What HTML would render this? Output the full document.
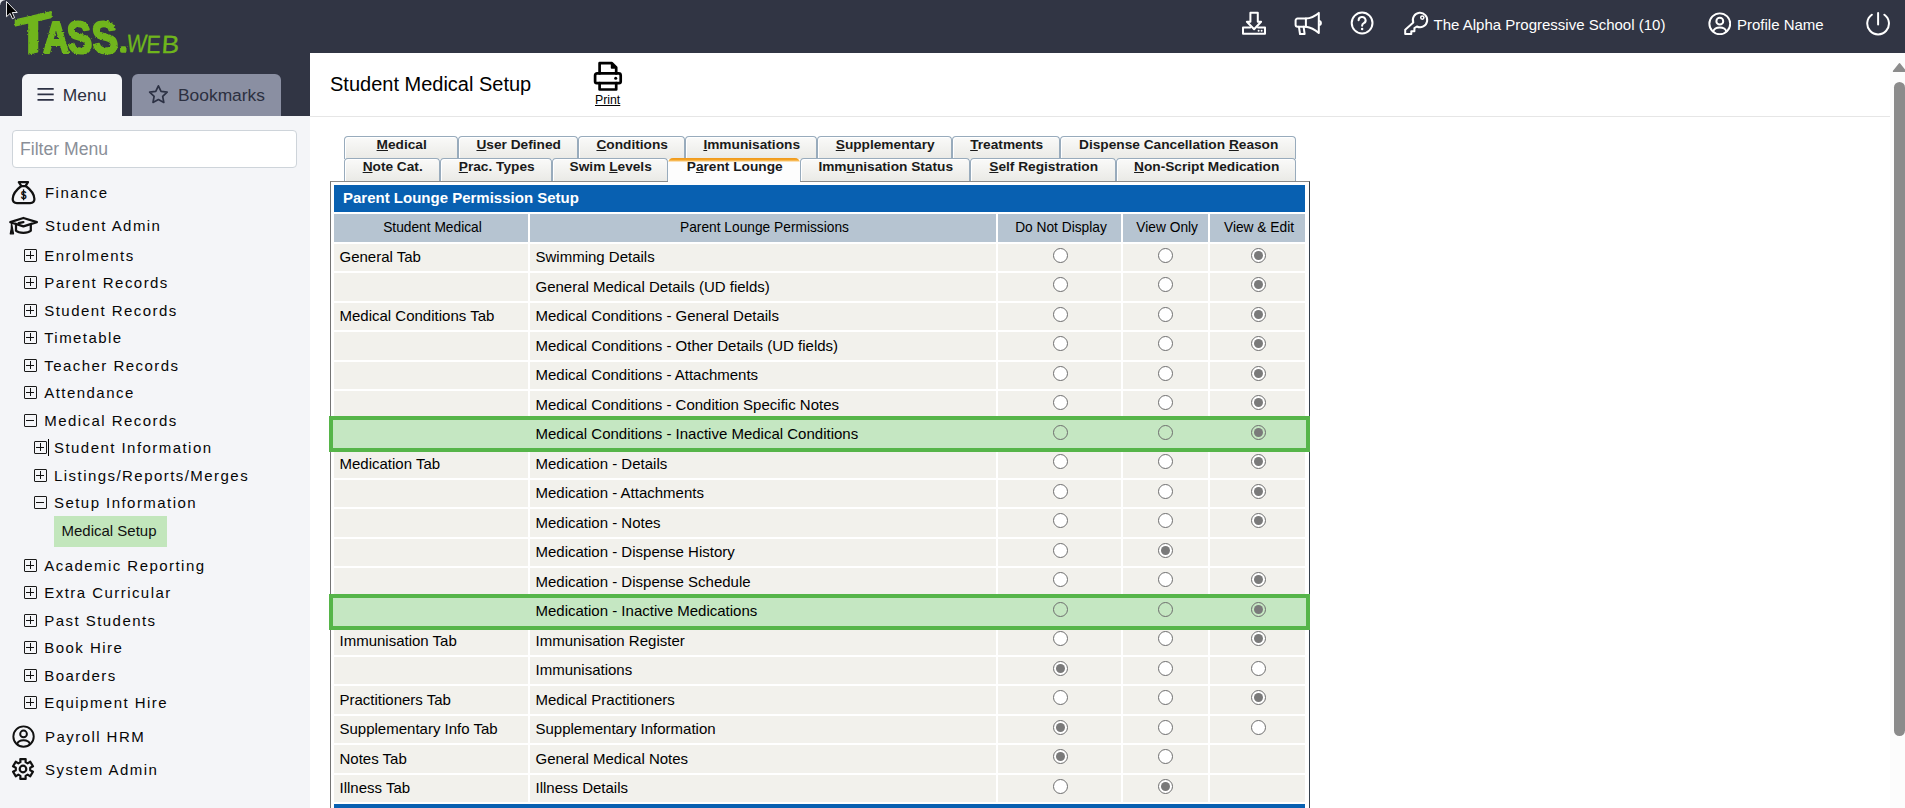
<!DOCTYPE html>
<html lang="en">
<head>
<meta charset="utf-8">
<title>Student Medical Setup</title>
<style>
*{box-sizing:border-box;margin:0;padding:0}
html,body{width:1905px;height:808px;overflow:hidden;background:#fff;font-family:"Liberation Sans",Arial,sans-serif;color:#000}
.abs{position:absolute}
#top{position:absolute;left:0;top:0;width:1905px;height:53px;background:#313544}
#sidehead{position:absolute;left:0;top:0;width:310px;height:116px;background:#313544}
#side{position:absolute;left:0;top:116px;width:310px;height:692px;background:#f4f5f8}
#logo{position:absolute;left:0;top:0}
.mtab{position:absolute;top:74px;height:42px;border-radius:6px 6px 0 0;font-size:17.4px;color:#2c3040;line-height:43.5px}
#mt1{left:22px;width:100px;background:#f4f5f8}
#mt2{left:132px;width:149px;background:#8a8fa2}
#filter{position:absolute;left:12px;top:130px;width:285px;height:38px;border:1px solid #ced4da;border-radius:4px;background:#fff;font-size:17.6px;color:#8a8f98;line-height:37px;padding-left:7px}
.m1{position:absolute;left:45px;font-size:15px;letter-spacing:1.45px;color:#060606;white-space:nowrap;line-height:20px}
.m2{position:absolute;left:44.3px;font-size:15px;letter-spacing:1.45px;color:#060606;white-space:nowrap;line-height:20px}
.m3{position:absolute;left:54px;font-size:15px;letter-spacing:1.45px;color:#060606;white-space:nowrap;line-height:20px}
.bx{position:absolute;width:13px;height:13px;border:1px solid #1a1a1a;border-radius:1px}
.bx:before{content:"";position:absolute;left:1px;top:5px;width:8.3px;height:1.2px;background:#111}
.bx.p:after{content:"";position:absolute;left:5px;top:1px;width:1.2px;height:8px;background:#111}
#msel{position:absolute;left:54px;top:516px;width:113px;height:31px;background:#c2e6bc;font-size:15px;line-height:29px;padding-left:7.5px;color:#111}
.ti{position:absolute;color:#fff;font-size:15px;white-space:nowrap;line-height:20px;margin-left:0.6px}
#title{position:absolute;left:330px;top:72px;font-size:20px;line-height:24px;white-space:nowrap}
#tline{position:absolute;left:310px;top:116px;width:1583px;height:1px;background:#e6e6e6}
#print{position:absolute;left:595px;top:92.5px;font-size:12.3px;line-height:14px;text-decoration:underline}
.tab{position:absolute;height:23px;border:1px solid #98abbc;border-bottom:none;border-radius:4px 4px 0 0;box-shadow:inset 1px 1px 0 #fff;background:linear-gradient(#fafaf9,#eaeae6);font-weight:bold;font-size:13.7px;line-height:15px;text-align:center;color:#1a1a1a;white-space:nowrap;padding-left:1.4px}
.tab u{text-decoration:underline}
.tab.sel{background:linear-gradient(#ef981c 0,#f4a424 2px,#f9cb80 3px,#fdfdfd 4.2px);border:none;box-shadow:none;border-radius:5px 5px 0 0;padding-top:1px;height:27px;z-index:3}
#panel{position:absolute;left:330px;top:181px;width:980px;height:640px;border:1px solid #8a8a8a;border-left-color:#747474;border-right:1px solid #36404c;background:#fff}
#ph{position:absolute;left:334px;top:185px;width:971px;height:27px;background:#0860b1;color:#fff;font-weight:bold;font-size:15px;line-height:26px;padding-left:9px}
.ch{position:absolute;top:214px;height:28px;background:#b6c4d1;font-size:13.75px;line-height:27px;text-align:center;color:#000;padding-left:3px}
.c{position:absolute;height:27.5px;background:#f2f1ec}
.t{position:absolute;font-size:15px;line-height:25px;padding-left:5.5px;white-space:nowrap;color:#000}
.r{position:absolute;width:15px;height:15px;border-radius:50%;border:1px solid #6e6e6e;background:#fff}
.r.on:after{content:"";position:absolute;left:2px;top:2px;width:9px;height:9px;border-radius:50%;background:#7a7a7a}
.hl{position:absolute;left:329px;width:981px;height:36px;border:4px solid #56b549;background:#c5e7c2}
#sb{position:absolute;left:1890px;top:53px;width:15px;height:755px;background:#fcfcfc;overflow:hidden}
#sb i{position:absolute;left:4px;top:29px;width:11px;height:654px;border-radius:5.5px;background:#8b8b8b}
#corner{position:absolute;left:0;top:0;width:5px;height:5px;background:radial-gradient(circle at 100% 100%,rgba(230,231,234,0) 4.2px,#e6e7ea 5.2px)}
</style>
</head>
<body>
<div id="top"></div>
<div id="sidehead"></div>
<div id="side"></div>
<svg id="logo" width="200" height="70" viewBox="0 0 200 70" style="position:absolute;left:0;top:0;overflow:visible">
<defs><filter id="rough" x="-5%" y="-5%" width="110%" height="110%"><feTurbulence type="fractalNoise" baseFrequency="0.55" numOctaves="2" seed="3" result="n"/><feDisplacementMap in="SourceGraphic" in2="n" scale="2.6" xChannelSelector="R" yChannelSelector="G"/></filter></defs>
<g fill="#6fb51c" stroke="#6fb51c" stroke-linejoin="round" font-family="Liberation Sans,Arial,sans-serif" font-weight="bold" filter="url(#rough)">
<text transform="translate(14.800,57.300) skewY(-13) scale(1.12,1)" font-size="54" stroke-width="1.200">T</text>
<text transform="translate(43,52.800) scale(0.806,1)" font-size="45" stroke-width="2.2">A</text>
<text transform="translate(68.500,52.800) scale(0.817,1) skewX(6)" font-size="45" stroke-width="2.2">S</text>
<text transform="translate(93.500,52.800) scale(0.85,1) skewX(6)" font-size="45" stroke-width="2.2">S</text>
<text transform="translate(120.500,50.900)" font-size="20" stroke-width="3.600">.</text>
</g>
<g fill="#6fb51c" stroke="#6fb51c" stroke-width="0.300" font-family="Liberation Sans,Arial,sans-serif">
<text transform="translate(126,52) scale(0.84,1) skewX(-8)" font-size="25">W</text>
<text transform="translate(146,52.500) scale(0.85,1) skewX(-4)" font-size="25">E</text>
<text transform="translate(161,52.500) scale(1.06,1) skewX(-4)" font-size="25">B</text>
</g>
<path d="M6.5 1.500v15.200l3.600-3.300 2.300 5.300 2.200-1-2.300-5.200h4.900z" fill="#000" stroke="#fff" stroke-width="0.900" stroke-linejoin="round"/>
</svg>

<div class="mtab" id="mt1"><span style="position:absolute;left:40.800px">Menu</span></div>
<div class="mtab" id="mt2"><span style="position:absolute;left:46px">Bookmarks</span></div>
<div id="filter">Filter Menu</div>
<div class="m1" style="top:183px">Finance</div>
<div class="m1" style="top:216px">Student Admin</div>
<div class="bx p" style="left:24px;top:249px"></div>
<div class="m2" style="top:246px">Enrolments</div>
<div class="bx p" style="left:24px;top:276px"></div>
<div class="m2" style="top:273px">Parent Records</div>
<div class="bx p" style="left:24px;top:304px"></div>
<div class="m2" style="top:301px">Student Records</div>
<div class="bx p" style="left:24px;top:331px"></div>
<div class="m2" style="top:328px">Timetable</div>
<div class="bx p" style="left:24px;top:359px"></div>
<div class="m2" style="top:356px">Teacher Records</div>
<div class="bx p" style="left:24px;top:386px"></div>
<div class="m2" style="top:383px">Attendance</div>
<div class="bx" style="left:24px;top:414px"></div>
<div class="m2" style="top:411px">Medical Records</div>
<div class="bx p" style="left:34px;top:441px"></div>
<div class="m3" style="top:438px">Student Information</div>
<div class="bx p" style="left:34px;top:469px"></div>
<div class="m3" style="top:466px">Listings/Reports/Merges</div>
<div class="bx" style="left:34px;top:496px"></div>
<div class="m3" style="top:493px">Setup Information</div>
<div id="msel">Medical Setup</div>
<div class="abs" style="left:48px;top:439px;width:1px;height:17px;background:#000"></div>
<div class="bx p" style="left:24px;top:559px"></div>
<div class="m2" style="top:556px">Academic Reporting</div>
<div class="bx p" style="left:24px;top:586px"></div>
<div class="m2" style="top:583px">Extra Curricular</div>
<div class="bx p" style="left:24px;top:614px"></div>
<div class="m2" style="top:611px">Past Students</div>
<div class="bx p" style="left:24px;top:641px"></div>
<div class="m2" style="top:638px">Book Hire</div>
<div class="bx p" style="left:24px;top:669px"></div>
<div class="m2" style="top:666px">Boarders</div>
<div class="bx p" style="left:24px;top:696px"></div>
<div class="m2" style="top:693px">Equipment Hire</div>
<div class="m1" style="top:727px">Payroll HRM</div>
<div class="m1" style="top:760px">System Admin</div>
<div class="ti" style="left:1433px;top:15px">The Alpha Progressive School (10)</div>
<div class="ti" style="left:1736.400px;top:15px">Profile Name</div>
<div id="title">Student Medical Setup</div>
<div id="tline"></div>
<div id="print">Print</div>
<div class="tab" style="left:344px;top:136px;width:114px"><u>M</u>edical</div>
<div class="tab" style="left:458px;top:136px;width:120px"><u>U</u>ser Defined</div>
<div class="tab" style="left:578px;top:136px;width:107px"><u>C</u>onditions</div>
<div class="tab" style="left:685px;top:136px;width:132px"><u>I</u>mmunisations</div>
<div class="tab" style="left:817px;top:136px;width:135px"><u>S</u>upplementary</div>
<div class="tab" style="left:952px;top:136px;width:108px"><u>T</u>reatments</div>
<div class="tab" style="left:1060px;top:136px;width:236px">Dispense Cancellation <u>R</u>eason</div>
<div class="tab" style="left:344px;top:158px;width:96px"><u>N</u>ote Cat.</div>
<div class="tab" style="left:440px;top:158px;width:112px"><u>P</u>rac. Types</div>
<div class="tab" style="left:552px;top:158px;width:116px">Swim <u>L</u>evels</div>
<div class="tab sel" style="left:668px;top:158px;width:132px">P<u>a</u>rent Lounge</div>
<div class="tab" style="left:800px;top:158px;width:170px">Imm<u>u</u>nisation Status</div>
<div class="tab" style="left:970px;top:158px;width:146px"><u>S</u>elf Registration</div>
<div class="tab" style="left:1116px;top:158px;width:180px"><u>N</u>on-Script Medication</div>
<div id="panel"></div>
<div id="ph">Parent Lounge Permission Setup</div>
<div class="ch" style="left:334px;width:194.0px">Student Medical</div>
<div class="ch" style="left:530px;width:466.0px">Parent Lounge Permissions</div>
<div class="ch" style="left:998px;width:123.0px">Do Not Display</div>
<div class="ch" style="left:1123px;width:85.3px">View Only</div>
<div class="ch" style="left:1210px;width:95.0px">View &amp; Edit</div>
<div class="c" style="left:334px;top:243.5px;width:194.0px"></div>
<div class="c" style="left:530px;top:243.5px;width:466.0px"></div>
<div class="c" style="left:998px;top:243.5px;width:123.0px"></div>
<div class="c" style="left:1123px;top:243.5px;width:85.3px"></div>
<div class="c" style="left:1210px;top:243.5px;width:95.0px"></div>
<div class="c" style="left:334px;top:273.0px;width:194.0px"></div>
<div class="c" style="left:530px;top:273.0px;width:466.0px"></div>
<div class="c" style="left:998px;top:273.0px;width:123.0px"></div>
<div class="c" style="left:1123px;top:273.0px;width:85.3px"></div>
<div class="c" style="left:1210px;top:273.0px;width:95.0px"></div>
<div class="c" style="left:334px;top:302.5px;width:194.0px"></div>
<div class="c" style="left:530px;top:302.5px;width:466.0px"></div>
<div class="c" style="left:998px;top:302.5px;width:123.0px"></div>
<div class="c" style="left:1123px;top:302.5px;width:85.3px"></div>
<div class="c" style="left:1210px;top:302.5px;width:95.0px"></div>
<div class="c" style="left:334px;top:332.0px;width:194.0px"></div>
<div class="c" style="left:530px;top:332.0px;width:466.0px"></div>
<div class="c" style="left:998px;top:332.0px;width:123.0px"></div>
<div class="c" style="left:1123px;top:332.0px;width:85.3px"></div>
<div class="c" style="left:1210px;top:332.0px;width:95.0px"></div>
<div class="c" style="left:334px;top:361.5px;width:194.0px"></div>
<div class="c" style="left:530px;top:361.5px;width:466.0px"></div>
<div class="c" style="left:998px;top:361.5px;width:123.0px"></div>
<div class="c" style="left:1123px;top:361.5px;width:85.3px"></div>
<div class="c" style="left:1210px;top:361.5px;width:95.0px"></div>
<div class="c" style="left:334px;top:391.0px;width:194.0px"></div>
<div class="c" style="left:530px;top:391.0px;width:466.0px"></div>
<div class="c" style="left:998px;top:391.0px;width:123.0px"></div>
<div class="c" style="left:1123px;top:391.0px;width:85.3px"></div>
<div class="c" style="left:1210px;top:391.0px;width:95.0px"></div>
<div class="c" style="left:334px;top:450.0px;width:194.0px"></div>
<div class="c" style="left:530px;top:450.0px;width:466.0px"></div>
<div class="c" style="left:998px;top:450.0px;width:123.0px"></div>
<div class="c" style="left:1123px;top:450.0px;width:85.3px"></div>
<div class="c" style="left:1210px;top:450.0px;width:95.0px"></div>
<div class="c" style="left:334px;top:479.5px;width:194.0px"></div>
<div class="c" style="left:530px;top:479.5px;width:466.0px"></div>
<div class="c" style="left:998px;top:479.5px;width:123.0px"></div>
<div class="c" style="left:1123px;top:479.5px;width:85.3px"></div>
<div class="c" style="left:1210px;top:479.5px;width:95.0px"></div>
<div class="c" style="left:334px;top:509.0px;width:194.0px"></div>
<div class="c" style="left:530px;top:509.0px;width:466.0px"></div>
<div class="c" style="left:998px;top:509.0px;width:123.0px"></div>
<div class="c" style="left:1123px;top:509.0px;width:85.3px"></div>
<div class="c" style="left:1210px;top:509.0px;width:95.0px"></div>
<div class="c" style="left:334px;top:538.5px;width:194.0px"></div>
<div class="c" style="left:530px;top:538.5px;width:466.0px"></div>
<div class="c" style="left:998px;top:538.5px;width:123.0px"></div>
<div class="c" style="left:1123px;top:538.5px;width:85.3px"></div>
<div class="c" style="left:1210px;top:538.5px;width:95.0px"></div>
<div class="c" style="left:334px;top:568.0px;width:194.0px"></div>
<div class="c" style="left:530px;top:568.0px;width:466.0px"></div>
<div class="c" style="left:998px;top:568.0px;width:123.0px"></div>
<div class="c" style="left:1123px;top:568.0px;width:85.3px"></div>
<div class="c" style="left:1210px;top:568.0px;width:95.0px"></div>
<div class="c" style="left:334px;top:627.0px;width:194.0px"></div>
<div class="c" style="left:530px;top:627.0px;width:466.0px"></div>
<div class="c" style="left:998px;top:627.0px;width:123.0px"></div>
<div class="c" style="left:1123px;top:627.0px;width:85.3px"></div>
<div class="c" style="left:1210px;top:627.0px;width:95.0px"></div>
<div class="c" style="left:334px;top:656.5px;width:194.0px"></div>
<div class="c" style="left:530px;top:656.5px;width:466.0px"></div>
<div class="c" style="left:998px;top:656.5px;width:123.0px"></div>
<div class="c" style="left:1123px;top:656.5px;width:85.3px"></div>
<div class="c" style="left:1210px;top:656.5px;width:95.0px"></div>
<div class="c" style="left:334px;top:686.0px;width:194.0px"></div>
<div class="c" style="left:530px;top:686.0px;width:466.0px"></div>
<div class="c" style="left:998px;top:686.0px;width:123.0px"></div>
<div class="c" style="left:1123px;top:686.0px;width:85.3px"></div>
<div class="c" style="left:1210px;top:686.0px;width:95.0px"></div>
<div class="c" style="left:334px;top:715.5px;width:194.0px"></div>
<div class="c" style="left:530px;top:715.5px;width:466.0px"></div>
<div class="c" style="left:998px;top:715.5px;width:123.0px"></div>
<div class="c" style="left:1123px;top:715.5px;width:85.3px"></div>
<div class="c" style="left:1210px;top:715.5px;width:95.0px"></div>
<div class="c" style="left:334px;top:745.0px;width:194.0px"></div>
<div class="c" style="left:530px;top:745.0px;width:466.0px"></div>
<div class="c" style="left:998px;top:745.0px;width:123.0px"></div>
<div class="c" style="left:1123px;top:745.0px;width:85.3px"></div>
<div class="c" style="left:1210px;top:745.0px;width:95.0px"></div>
<div class="c" style="left:334px;top:774.5px;width:194.0px"></div>
<div class="c" style="left:530px;top:774.5px;width:466.0px"></div>
<div class="c" style="left:998px;top:774.5px;width:123.0px"></div>
<div class="c" style="left:1123px;top:774.5px;width:85.3px"></div>
<div class="c" style="left:1210px;top:774.5px;width:95.0px"></div>
<div class="hl" style="top:416px"></div>
<div class="hl" style="top:594px"></div>
<div class="t" style="left:334px;top:244px">General Tab</div>
<div class="t" style="left:530px;top:244px">Swimming Details</div>
<div class="r" style="left:1053.0px;top:248px"></div>
<div class="r" style="left:1158.0px;top:248px"></div>
<div class="r on" style="left:1251.0px;top:248px"></div>
<div class="t" style="left:530px;top:274px">General Medical Details (UD fields)</div>
<div class="r" style="left:1053.0px;top:277px"></div>
<div class="r" style="left:1158.0px;top:277px"></div>
<div class="r on" style="left:1251.0px;top:277px"></div>
<div class="t" style="left:334px;top:303px">Medical Conditions Tab</div>
<div class="t" style="left:530px;top:303px">Medical Conditions - General Details</div>
<div class="r" style="left:1053.0px;top:307px"></div>
<div class="r" style="left:1158.0px;top:307px"></div>
<div class="r on" style="left:1251.0px;top:307px"></div>
<div class="t" style="left:530px;top:333px">Medical Conditions - Other Details (UD fields)</div>
<div class="r" style="left:1053.0px;top:336px"></div>
<div class="r" style="left:1158.0px;top:336px"></div>
<div class="r on" style="left:1251.0px;top:336px"></div>
<div class="t" style="left:530px;top:362px">Medical Conditions - Attachments</div>
<div class="r" style="left:1053.0px;top:366px"></div>
<div class="r" style="left:1158.0px;top:366px"></div>
<div class="r on" style="left:1251.0px;top:366px"></div>
<div class="t" style="left:530px;top:392px">Medical Conditions - Condition Specific Notes</div>
<div class="r" style="left:1053.0px;top:395px"></div>
<div class="r" style="left:1158.0px;top:395px"></div>
<div class="r on" style="left:1251.0px;top:395px"></div>
<div class="t" style="left:530px;top:421px">Medical Conditions - Inactive Medical Conditions</div>
<div class="r" style="left:1053.0px;top:425px;background:transparent"></div>
<div class="r" style="left:1158.0px;top:425px;background:transparent"></div>
<div class="r on" style="left:1251.0px;top:425px;background:transparent"></div>
<div class="t" style="left:334px;top:451px">Medication Tab</div>
<div class="t" style="left:530px;top:451px">Medication - Details</div>
<div class="r" style="left:1053.0px;top:454px"></div>
<div class="r" style="left:1158.0px;top:454px"></div>
<div class="r on" style="left:1251.0px;top:454px"></div>
<div class="t" style="left:530px;top:480px">Medication - Attachments</div>
<div class="r" style="left:1053.0px;top:484px"></div>
<div class="r" style="left:1158.0px;top:484px"></div>
<div class="r on" style="left:1251.0px;top:484px"></div>
<div class="t" style="left:530px;top:510px">Medication - Notes</div>
<div class="r" style="left:1053.0px;top:513px"></div>
<div class="r" style="left:1158.0px;top:513px"></div>
<div class="r on" style="left:1251.0px;top:513px"></div>
<div class="t" style="left:530px;top:539px">Medication - Dispense History</div>
<div class="r" style="left:1053.0px;top:543px"></div>
<div class="r on" style="left:1158.0px;top:543px"></div>
<div class="t" style="left:530px;top:569px">Medication - Dispense Schedule</div>
<div class="r" style="left:1053.0px;top:572px"></div>
<div class="r" style="left:1158.0px;top:572px"></div>
<div class="r on" style="left:1251.0px;top:572px"></div>
<div class="t" style="left:530px;top:598px">Medication - Inactive Medications</div>
<div class="r" style="left:1053.0px;top:602px;background:transparent"></div>
<div class="r" style="left:1158.0px;top:602px;background:transparent"></div>
<div class="r on" style="left:1251.0px;top:602px;background:transparent"></div>
<div class="t" style="left:334px;top:628px">Immunisation Tab</div>
<div class="t" style="left:530px;top:628px">Immunisation Register</div>
<div class="r" style="left:1053.0px;top:631px"></div>
<div class="r" style="left:1158.0px;top:631px"></div>
<div class="r on" style="left:1251.0px;top:631px"></div>
<div class="t" style="left:530px;top:657px">Immunisations</div>
<div class="r on" style="left:1053.0px;top:661px"></div>
<div class="r" style="left:1158.0px;top:661px"></div>
<div class="r" style="left:1251.0px;top:661px"></div>
<div class="t" style="left:334px;top:687px">Practitioners Tab</div>
<div class="t" style="left:530px;top:687px">Medical Practitioners</div>
<div class="r" style="left:1053.0px;top:690px"></div>
<div class="r" style="left:1158.0px;top:690px"></div>
<div class="r on" style="left:1251.0px;top:690px"></div>
<div class="t" style="left:334px;top:716px">Supplementary Info Tab</div>
<div class="t" style="left:530px;top:716px">Supplementary Information</div>
<div class="r on" style="left:1053.0px;top:720px"></div>
<div class="r" style="left:1158.0px;top:720px"></div>
<div class="r" style="left:1251.0px;top:720px"></div>
<div class="t" style="left:334px;top:746px">Notes Tab</div>
<div class="t" style="left:530px;top:746px">General Medical Notes</div>
<div class="r on" style="left:1053.0px;top:749px"></div>
<div class="r" style="left:1158.0px;top:749px"></div>
<div class="t" style="left:334px;top:775px">Illness Tab</div>
<div class="t" style="left:530px;top:775px">Illness Details</div>
<div class="r" style="left:1053.0px;top:779px"></div>
<div class="r on" style="left:1158.0px;top:779px"></div>
<div class="abs" style="left:334px;top:804px;width:971px;height:4px;background:#0860b1"></div>
<div id="sb"><i></i><svg class="abs" style="left:2px;top:8px" width="16" height="13" viewBox="0 0 16 13"><path d="M7.500 3L13.300 10.200H1.700z" fill="#8b8b8b" stroke="#8b8b8b" stroke-width="1.800" stroke-linejoin="round"/></svg></div><div id="corner"></div>
<svg class="abs" style="left:1242px;top:11px" width="24" height="25" viewBox="0 0 24 25" ><g fill="none" stroke="#fff" stroke-width="2" stroke-linecap="round" stroke-linejoin="round"><path d="M8.400 1.800h7.400v9h3.300L12.100 18.200 4.900 10.800h3.500z"/><path d="M8.200 16.400H1v6.400h22v-6.400h-7"/></g><circle cx="16.600" cy="19.700" r="1" fill="#fff"/><circle cx="19.600" cy="19.700" r="1" fill="#fff"/></svg>
<svg class="abs" style="left:1294px;top:10.8px" width="28" height="25" viewBox="0 0 28 25" ><g fill="none" stroke="#fff" stroke-width="2" stroke-linecap="round" stroke-linejoin="round"><path d="M3.600 7.500h8.300Q18.650 7.100 24.800 1.900V22.100Q18.650 16.500 11.900 15.700H3.600a2 2 0 0 1-2-2V9.500a2 2 0 0 1 2-2z"/><path d="M11.900 7.500v8.200"/><path d="M4.900 15.700L6 23h4.600L9.600 15.700"/><path d="M25 10a1.900 1.900 0 0 1 0 3.800"/></g></svg>
<svg class="abs" style="left:1350px;top:11.3px" width="24" height="24" viewBox="0 0 24 24" ><g fill="none" stroke="#fff" stroke-width="2" stroke-linecap="round" stroke-linejoin="round"><circle cx="12.1" cy="12" r="10.400"/><path d="M8.6 9.3a3.5 3.3 0 1 1 5.2 2.9c-1.2.7-1.7 1.3-1.7 2.6"/></g><circle cx="12.1" cy="18" r="1.25" fill="#fff"/></svg>
<svg class="abs" style="left:1403px;top:11px" width="26" height="25" viewBox="0 0 26 25" ><g fill="none" stroke="#fff" stroke-width="2" stroke-linecap="round" stroke-linejoin="round"><path d="M10.300 11.600L2.200 18.700V23H8.300V20.300H11.400V17.200L13.900 15.500A7.200 7.200 0 1 0 10.300 11.600z"/><circle cx="19.300" cy="6.600" r="1.600" stroke-width="1.500"/></g></svg>
<svg class="abs" style="left:1707.9px;top:11.6px" width="23.6" height="23.6" viewBox="0 0 24 24" ><g fill="none" stroke="#fff" stroke-width="2" stroke-linecap="round" stroke-linejoin="round"><circle cx="12" cy="12" r="10.6"/><circle cx="12" cy="9.3" r="3.5"/><path d="M5.3 19.900C6.200 16.800 8.800 15.800 12 15.800s5.800 1 6.700 4.100"/></g></svg>
<svg class="abs" style="left:1866px;top:10.5px" width="24" height="25" viewBox="0 0 24 25" ><g fill="none" stroke="#fff" stroke-width="2" stroke-linecap="round" stroke-linejoin="round"><path d="M12.100 2v11.600"/><path d="M5.800 3.700a10.850 10.850 0 1 0 12.600 0"/></g></svg>
<svg class="abs" style="left:11px;top:180px" width="26" height="25" viewBox="0 0 26 25" ><g fill="none" stroke="#111" stroke-width="2.25" stroke-linecap="round" stroke-linejoin="round"><path d="M7.800 2.100h9.200l-2.500 3.900h-4.200z"/><path d="M10.300 6C5.800 9.400 1.700 14.600 1.700 19c0 2.700 1.800 4 4.300 4h13.100c2.500 0 4.300-1.300 4.300-4 0-4.400-4.100-9.600-8.600-13"/></g><path d="M12.550 9.300v11" stroke="#111" stroke-width="1.300"/><text x="12.550" y="18.900" font-family="Liberation Sans,Arial,sans-serif" font-weight="bold" font-size="10.500" text-anchor="middle" fill="#111">$</text></svg>
<svg class="abs" style="left:8px;top:214px" width="32" height="22" viewBox="0 0 32 22" ><g fill="none" stroke="#111" stroke-width="2.25" stroke-linecap="round" stroke-linejoin="round"><path d="M15.400 4L28.900 8.100 15.400 12.400 2.300 8.100z"/><path d="M8 10.600v6.200c1.500 1.400 4.400 2.100 7.400 2.100s5.900-.7 7.400-2.100v-6.200"/><path d="M15.400 8.100L10.600 9.200"/><path d="M3.500 9.200L3.300 14.500 2.300 19.800h3.200L4.500 14.500z" stroke-width="1.300" fill="#111"/></g></svg>
<svg class="abs" style="left:12px;top:724.8px" width="23.1" height="23.1" viewBox="0 0 24 24" ><g fill="none" stroke="#111" stroke-width="2" stroke-linecap="round" stroke-linejoin="round"><circle cx="12" cy="12" r="10.6"/><circle cx="12" cy="9.3" r="3.5"/><path d="M5.3 19.900C6.200 16.800 8.800 15.800 12 15.800s5.800 1 6.700 4.100"/></g></svg>
<svg class="abs" style="left:11.4px;top:757.4px" width="24" height="24" viewBox="0 0 24 24" ><g fill="none" stroke="#111" stroke-width="2.25" stroke-linecap="round" stroke-linejoin="round"><path d="M9.33 2.05L14.67 2.05L14.58 5.17L16.62 6.35L19.28 4.72L21.95 9.33L19.20 10.82L19.20 13.18L21.95 14.67L19.28 19.28L16.62 17.65L14.58 18.83L14.67 21.95L9.33 21.95L9.42 18.83L7.38 17.65L4.72 19.28L2.05 14.67L4.80 13.18L4.80 10.82L2.05 9.33L4.72 4.72L7.38 6.35L9.42 5.17z" stroke-width="2.200"/><circle cx="12" cy="12" r="3.300" stroke-width="2.200"/></g></svg>
<svg class="abs" style="left:36px;top:84px" width="20" height="22" viewBox="0 0 20 22" ><g stroke="#2c3144" stroke-width="1.900" stroke-linecap="butt" fill="none"><path d="M1.500 4.900h16.200M1.500 10.400h16.200M1.500 15.900h16.200"/></g></svg>
<svg class="abs" style="left:147px;top:83px" width="24" height="24" viewBox="0 0 24 24" ><path d="M11.40 2.80L14.05 8.36L20.15 9.16L15.68 13.39L16.81 19.44L11.40 16.50L5.99 19.44L7.12 13.39L2.65 9.16L8.75 8.36z" fill="none" stroke="#2c3144" stroke-width="1.700" stroke-linejoin="round"/></svg>
<svg class="abs" style="left:592px;top:60px" width="32" height="33" viewBox="0 0 32 33" ><g fill="none" stroke="#000" stroke-width="2.700" stroke-linejoin="round" stroke-linecap="round"><path d="M7.600 13.400V3.200h12.300l4.300 4.300v5.900"/><path d="M7.600 23.100H4.700a1.600 1.600 0 0 1-1.600-1.600V15.400a2 2 0 0 1 2-2h21.600a2 2 0 0 1 2 2v6.100a1.600 1.600 0 0 1-1.600 1.600h-2.900"/><path d="M7.600 23.100h16.600v6.400H7.600z"/><path d="M19.600 4v4h4z" stroke-width="1.600" fill="#000"/></g><circle cx="23.700" cy="18.200" r="1.500" fill="#000"/></svg>
</body>
</html>
